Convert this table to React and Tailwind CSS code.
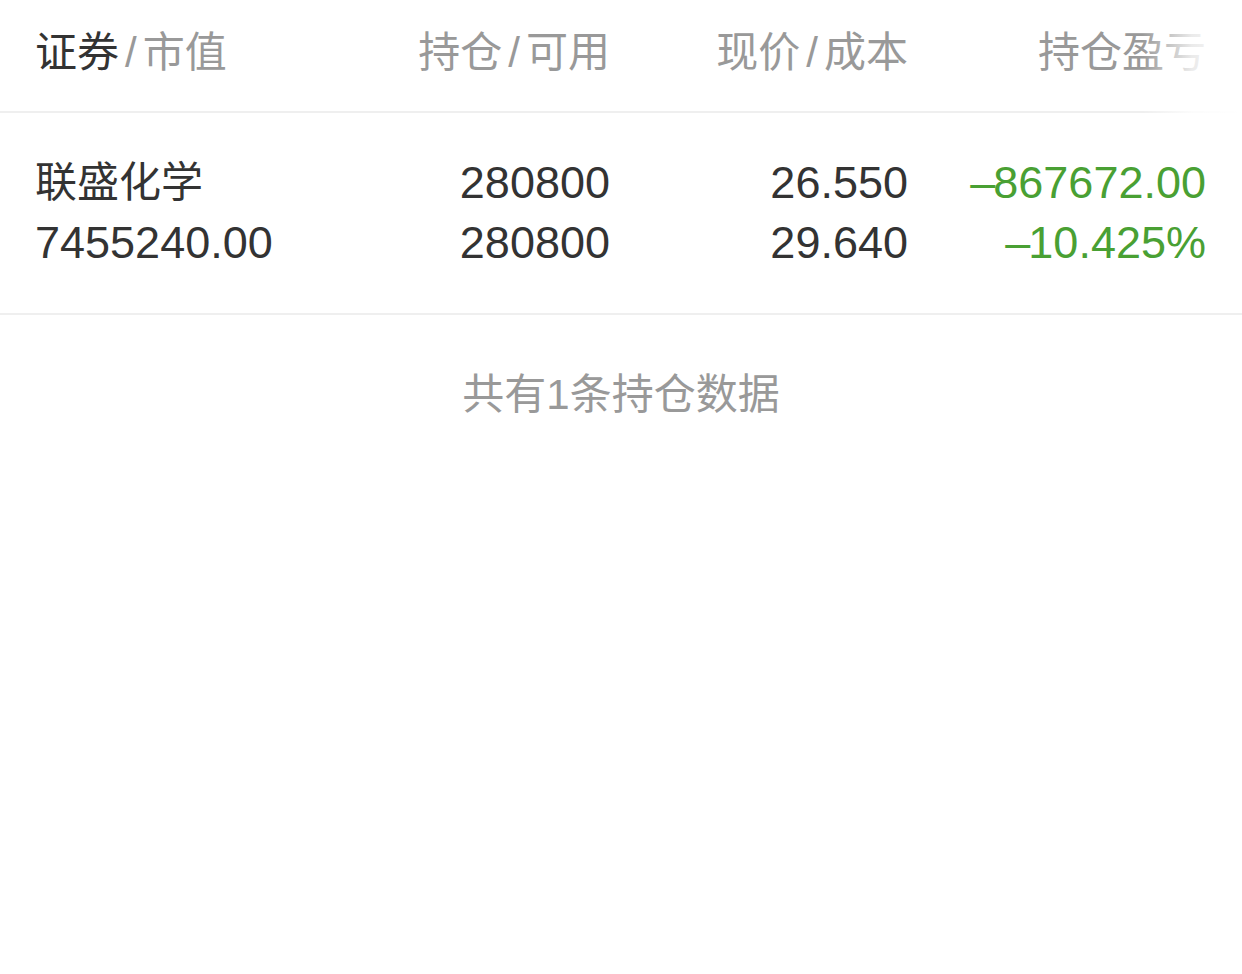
export default function App() {
  const cjk = { fontFamily: '"Liberation Sans", "Noto Sans CJK SC", sans-serif' };
  const Dash = () => <span className="tracking-[-2px]">–</span>;
  const Slash = () => <span className="mx-[6px]">/</span>;
  return (
    <div className="w-[1242px] h-[974px] bg-white" style={cjk}>
      <div className="relative h-[113px] border-b-2 border-[#efefef]">
        <div className="flex h-full items-center pb-[6px] pl-[35px] pr-[36px] text-[42px] leading-none text-[#999999]">
          <div className="w-[277px]">
            <span className="text-[#333333]">证券</span>
            <Slash />市值
          </div>
          <div className="w-[298px] text-right">持仓<Slash />可用</div>
          <div className="w-[298px] text-right">现价<Slash />成本</div>
          <div className="w-[298px] text-right">持仓盈亏</div>
        </div>
        <div className="absolute right-0 top-0 bottom-[-2px] w-[100px] bg-gradient-to-r from-transparent via-white/80 to-white" />
      </div>
      <div className="flex py-[40px] pl-[35px] pr-[36px] border-b-2 border-[#efefef] leading-[60px]">
        <div className="w-[277px] flex flex-col text-[#333333]">
          <span className="text-[42px]">联盛化学</span>
          <span className="text-[45px]">7455240.00</span>
        </div>
        <div className="w-[298px] flex flex-col items-end text-[45px] text-[#333333]">
          <span>280800</span>
          <span>280800</span>
        </div>
        <div className="w-[298px] flex flex-col items-end text-[45px] text-[#333333]">
          <span>26.550</span>
          <span>29.640</span>
        </div>
        <div className="w-[298px] flex flex-col items-end text-[45px] text-[#49a033]">
          <span><Dash />867672.00</span>
          <span><Dash />10.425%</span>
        </div>
      </div>
      <div className="flex justify-center pt-[59px] text-[42px] leading-none text-[#999999]">
        共有1条持仓数据
      </div>
    </div>
  );
}
